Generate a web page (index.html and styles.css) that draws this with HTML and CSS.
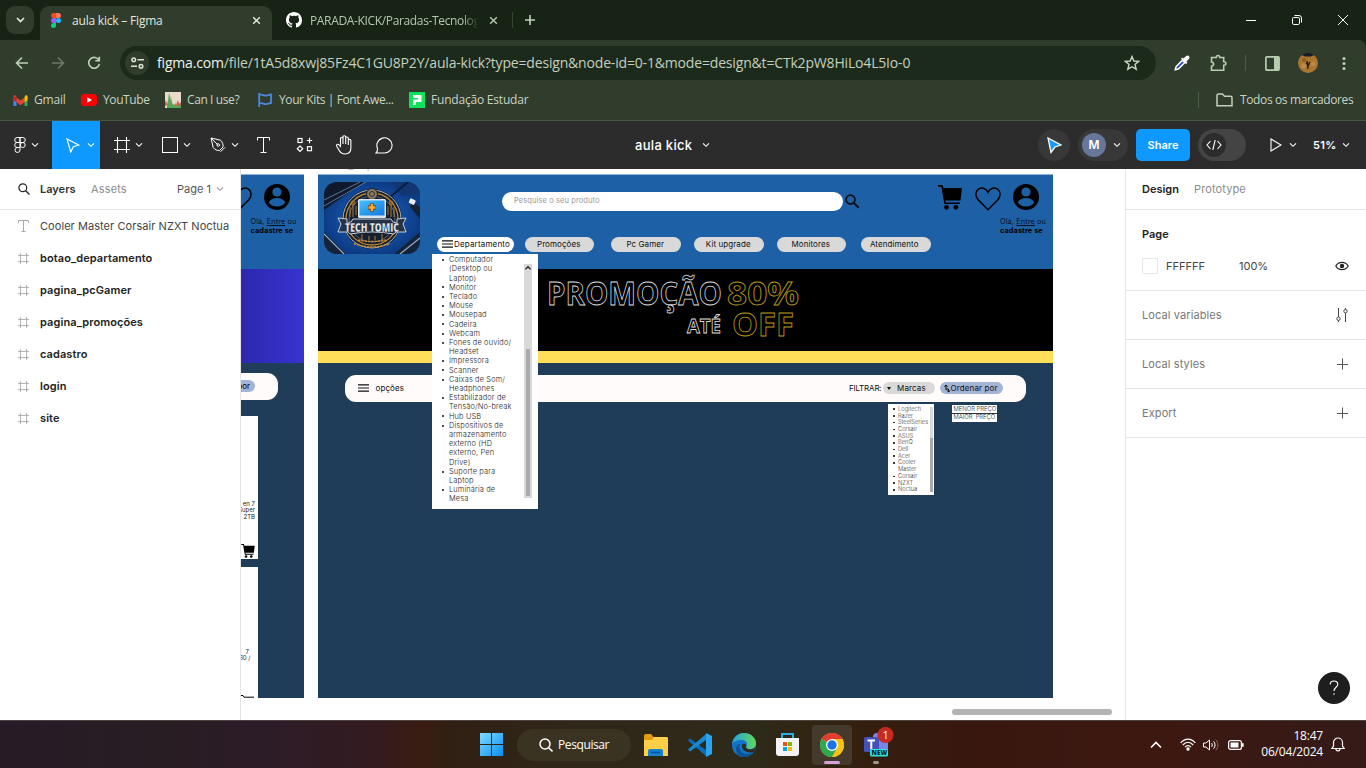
FILE: index.html
```html
<!DOCTYPE html>
<html lang="pt-BR">
<head>
<meta charset="utf-8">
<title>aula kick – Figma</title>
<link rel="stylesheet" href="styles.css">
</head>
<body>
<svg class="defs" width="0" height="0" aria-hidden="true">
  <symbol id="chev" viewBox="0 0 8 6"><path d="M1 1.3 4 4.3 7 1.3" fill="none" stroke="currentColor" stroke-width="1.1"/></symbol>
  <symbol id="close" viewBox="0 0 10 10"><path d="M1.3 1.3 8.7 8.7M8.7 1.3 1.3 8.7" fill="none" stroke="currentColor" stroke-width="1.6"/></symbol>
  <symbol id="frame" viewBox="0 0 16 16"><path d="M3.5 0v16M12.5 0v16M0 3.5h16M0 12.5h16" fill="none" stroke="currentColor" stroke-width="1.1"/></symbol>
  <symbol id="plus" viewBox="0 0 12 12"><path d="M6.5 .5v11M1 6.5h11" fill="none" stroke="currentColor"/></symbol>
  <symbol id="cart" viewBox="0 0 24 25"><path d="M0 0h4.5l1 3H24l-1.5 12.5H7.3l.6 2H22v1.6H6.3L3.3 1.8H0z"/><circle cx="8.5" cy="22.3" r="2.4"/><circle cx="17.8" cy="22.3" r="2.4"/></symbol>
  <symbol id="heart" viewBox="0 0 26 24"><path d="M13 22.7 3.4 13C.2 9.6.2 5 2.9 2.6 6-.3 11 .8 13 5.3 15 .8 20-.3 23.1 2.6 25.8 5 25.800 9.600 22.600 13z" fill="none" stroke="#000" stroke-width="1.5"/></symbol>
  <symbol id="user" viewBox="0 0 26 26"><circle cx="13" cy="13" r="13"/><circle cx="13" cy="8" r="4.600" fill="#1e60a6"/><path d="M4.800 18.500C6 15.500 9 14 13 14s7 1.500 8.200 4.500C19.500 21 16.500 22.500 13 22.500S6.500 21 4.800 18.500z" fill="#1e60a6"/></symbol>
  <symbol id="burger" viewBox="0 0 11 8"><path d="M0 .8h11M0 4h11M0 7.200h11" fill="none" stroke="#111" stroke-width="1.200"/></symbol>
</svg>

<div class="tabs">
  <div class="tabmenu"><svg width="9" height="6"><path d="M1 1 4.500 4.500 8 1" fill="none" stroke="#e4e9df" stroke-width="1.700"/></svg></div>
  <div class="tab active">
    <svg class="fig" width="10" height="15" viewBox="0 0 10 15"><path d="M5 0H2.500a2.500 2.500 0 0 0 0 5H5z" fill="#f24e1e"/><path d="M5 0h2.500a2.500 2.500 0 0 1 0 5H5z" fill="#ff7262"/><path d="M5 5H2.500a2.500 2.500 0 0 0 0 5H5z" fill="#a259ff"/><circle cx="7.500" cy="7.500" r="2.500" fill="#1abcfe"/><path d="M5 10H2.500A2.500 2.500 0 1 0 5 12.500z" fill="#0acf83"/></svg>
    <span class="tt t-fig">aula kick – Figma</span>
    <svg class="x" width="9" height="9"><use href="#close"/></svg>
  </div>
  <div class="tab second">
    <svg width="16" height="16" viewBox="0 0 16 16"><path fill="#fff" d="M8 0C3.580 0 0 3.580 0 8c0 3.540 2.290 6.530 5.470 7.590.4.070.55-.17.55-.38 0-.19-.01-.82-.01-1.490-2.010.37-2.530-.49-2.690-.94-.09-.23-.48-.94-.82-1.130-.28-.15-.68-.52-.01-.53.63-.01 1.080.58 1.230.82.72 1.210 1.870.87 2.330.66.07-.52.28-.87.51-1.070-1.780-.2-3.640-.89-3.640-3.950 0-.87.31-1.590.82-2.150-.08-.2-.36-1.020.08-2.120 0 0 .67-.21 2.200.82.64-.18 1.320-.27 2-.27s1.360.09 2 .27c1.530-1.040 2.200-.82 2.200-.82.44 1.100.16 1.920.08 2.120.51.56.82 1.270.82 2.150 0 3.070-1.870 3.750-3.650 3.950.29.25.54.73.54 1.480 0 1.070-.01 1.930-.01 2.200 0 .21.15.46.55.38A8 8 0 0 0 16 8c0-4.420-3.580-8-8-8z"/></svg>
    <span class="tt t-git">PARADA-KICK/Paradas-Tecnolog</span>
    <svg class="x" width="9" height="9"><use href="#close"/></svg>
  </div>
  <i class="vbar"></i>
  <svg class="newtab" width="12" height="12" viewBox="0 0 12 12"><path d="M6 1v10M1 6h10" stroke="#c3d2bb" stroke-width="1.600"/></svg>
  <div class="winbtns">
    <svg width="10" height="10"><path d="M0 5.500h10" stroke="#fff"/></svg>
    <svg width="10" height="10"><path d="M2.500.5H7A2.500 2.500 0 0 1 9.500 3v4.500" fill="none" stroke="#fff"/><rect x=".5" y="2.500" width="7" height="7" rx="1.300" fill="none" stroke="#fff"/></svg>
    <svg width="10" height="10"><path d="M0 0 10 10M10 0 0 10" stroke="#fff"/></svg>
  </div>
</div>

<div class="chrome">
  <div class="navrow">
    <svg class="nav" width="14" height="14" viewBox="0 0 14 14"><path d="M13 7H2M7 1.500 1.500 7 7 12.500" fill="none" stroke="#c0d0b8" stroke-width="1.600"/></svg>
    <svg class="nav" width="14" height="14" viewBox="0 0 14 14"><path d="M1 7h11M7 1.500 12.500 7 7 12.500" fill="none" stroke="#6d7a68" stroke-width="1.600"/></svg>
    <svg class="nav" width="14" height="14" viewBox="0 0 14 14"><path d="M12 4.500A5.400 5.400 0 1 0 12.400 8M12.300.8v4H8.300" fill="none" stroke="#c0d0b8" stroke-width="1.600"/></svg>
    <div class="omni">
      <span class="site"><svg width="13" height="12" viewBox="0 0 13 12" fill="none" stroke="#dbe5d4" stroke-width="1.500"><circle cx="2.700" cy="2.700" r="1.800"/><path d="M6.500 2.700H13M0 9.200h6"/><circle cx="10" cy="9.200" r="1.800"/></svg></span>
      <span class="url"><b>figma.com</b>/file/1tA5d8xwj85Fz4C1GU8P2Y/aula-kick?type=design&amp;node-id=0-1&amp;mode=design&amp;t=CTk2pW8HiLo4L5Io-0</span>
      <svg class="star" width="16" height="16" viewBox="0 0 16 16"><path d="M8 1.600 9.900 6l4.800.4-3.700 3.100 1.200 4.700L8 11.700l-4.200 2.500L5 9.500 1.300 6.400 6.100 6z" fill="none" stroke="#ccd8c6" stroke-width="1.400"/></svg>
    </div>
    <div class="exts">
      <svg width="18" height="18" viewBox="0 0 18 18"><path d="M2.300 15.700 3 12.800 9.500 6.200l2.300 2.300L5.300 15z" fill="#2742b8" stroke="#fff" stroke-width="1.600"/><path d="M9.300 4.800 13.200 8.700" stroke="#fff" stroke-width="2" stroke-linecap="round"/><path d="M12 6l2.500-2.500" stroke="#fff" stroke-width="4" stroke-linecap="round"/></svg>
      <svg width="19" height="18" viewBox="0 0 19 18"><path d="M2.500 3.500h4.800C7.300.8 10.700.8 10.700 3.500h4v4.300c3 .1 3 3.400 0 3.500v5H2.500v-4c2.800-.4 2.800-4 0-4.300z" fill="none" stroke="#b7cdae" stroke-width="1.600"/></svg>
      <i class="vbar"></i>
      <svg width="15" height="15" viewBox="0 0 15 15"><rect x=".9" y=".9" width="13.200" height="13.200" rx="1" fill="none" stroke="#b7cdae" stroke-width="1.700"/><path d="M9 1h5v13H9z" fill="#b7cdae"/></svg>
      <svg width="20" height="20" viewBox="0 0 20 20"><circle cx="10" cy="10" r="10" fill="#a97732"/><path d="M4 2a10 10 0 0 1 12 0L13 3.500H7z" fill="#171a29"/><path d="M9 8l1 8M8 10l3 2M12 9l-2 4" stroke="#2b190a" stroke-width="1.400"/><circle cx="5.500" cy="13" r="2.500" fill="#bd8b45"/><circle cx="15" cy="11" r="2.500" fill="#bd8b45"/><circle cx="6" cy="7" r="2" fill="#8c5e26"/></svg>
      <svg width="4" height="15" fill="#c0d0b8"><circle cx="2" cy="2.500" r="1.500"/><circle cx="2" cy="7.500" r="1.500"/><circle cx="2" cy="12.500" r="1.500"/></svg>
    </div>
  </div>
  <div class="marks">
    <span class="bm b1"><svg width="15" height="11" viewBox="0 0 14 11"><path d="M0 1.500V11h3V5z" fill="#4285f4"/><path d="M14 1.500V11h-3V5z" fill="#34a853"/><path d="M0 1.500V5l3 2.200V2.500z" fill="#c5221f"/><path d="M3 2.500v4.700l4 3 4-3V2.500l-4 3z" fill="#ea4335"/><path d="M11 2.500v4.700L14 5V1.500C14 0 12.500-.3 11.500.8z" fill="#fbbc04"/><path d="M0 1.500C0 0 1.500-.3 2.500.8L3 2.500z" fill="#ea4335"/></svg><em>Gmail</em></span>
    <span class="bm b2"><svg width="16" height="12"><rect width="16" height="12" rx="3.500" fill="#f00"/><path d="M6.200 3.300v5.400L11 6z" fill="#fff"/></svg><em>YouTube</em></span>
    <span class="bm b3"><svg width="16" height="16"><path d="M0 0h16v16H0z" fill="#e8dcc8"/><path d="M0 14V11l1-3 1 5zM9 14l1-3 1 2 2-5 1 4 2-2v4z" fill="#d05a4a"/><path d="M2 16v-4l1-3 1-8 1 4v4l1-5 1 7 2 2 2 1 2-2 1 2 2-1v3z" fill="#58a558"/></svg><em>Can I use?</em></span>
    <span class="bm b4"><svg width="14" height="14" viewBox="0 0 14 14"><path d="M1.200 0v14M1 2c3-1.500 5 1.500 8 .5 1.500-.5 3-1 4-1v8.500c-1 0-2.500.5-4 1-3 .9-5-2-8-.5" fill="none" stroke="#4a88dc" stroke-width="1.800"/></svg><em>Your Kits | Font Awe...</em></span>
    <span class="bm b5"><svg width="16" height="16"><path d="M0 0h16v16H0z" fill="#0be35d"/><path d="M4 3h8.500v7H7v3H4V7.500h5V6H4z" fill="#fff"/></svg><em>Fundação Estudar</em></span>
    <i class="vbar"></i>
    <span class="bm b6"><svg width="17" height="14" viewBox="0 0 17 14"><path d="M1 12.800V2.500c0-1 .5-1.500 1.500-1.500h4l2 2.200h6c1 0 1.500.5 1.500 1.500v8.100z" fill="none" stroke="#c3cfbd" stroke-width="1.500"/></svg><em>Todos os marcadores</em></span>
  </div>
</div>

<div class="toolbar">
  <div class="tool main"><svg width="12" height="16" viewBox="0 0 12 16" fill="none" stroke="#fff"><path d="M6 .5H3.200a2.500 2.500 0 0 0 0 5H6zM6 .5h2.800a2.500 2.500 0 0 1 0 5H6zM6 5.500H3.200a2.500 2.500 0 0 0 0 5H6z"/><circle cx="8.700" cy="8" r="2.500"/><path d="M6 10.500H3.200A2.500 2.500 0 1 0 6 13z"/></svg><svg class="c" width="8" height="6"><use href="#chev"/></svg></div>
  <div class="tool sel"><svg width="14" height="15" viewBox="0 0 14 15"><path d="M1 1 12.800 7 7.300 8.700 4.700 14z" fill="none" stroke="#fff" stroke-width="1.200"/></svg><svg class="c" width="8" height="6"><use href="#chev"/></svg></div>
  <div class="tool"><svg width="16" height="16"><use href="#frame"/></svg><svg class="c" width="8" height="6"><use href="#chev"/></svg></div>
  <div class="tool"><svg width="16" height="16"><rect x=".5" y=".5" width="15" height="15" fill="none" stroke="#fff"/></svg><svg class="c" width="8" height="6"><use href="#chev"/></svg></div>
  <div class="tool"><svg width="16" height="16" viewBox="0 0 16 16" fill="none" stroke="#fff"><path d="M1 1l9.500 2.200c2 1.800 2.800 4.300 2.500 6.800l-3.500 3.500C7 13.800 4.800 12.500 3.200 10.500zM1 1l6.500 6.500M10.500 14.800l4.500-4.500"/><circle cx="8.200" cy="8" r="1.300"/></svg><svg class="c" width="8" height="6"><use href="#chev"/></svg></div>
  <div class="tool nar"><svg width="14" height="16"><path d="M.5 3.500v-3h12v3M6.500 .5v15M3.500 15.500h6" fill="none" stroke="#fff"/></svg></div>
  <div class="tool nar"><svg width="17" height="16" viewBox="0 0 17 16" fill="none" stroke="#fff" stroke-width="1.200"><rect x="2" y="1.500" width="4" height="4"/><path d="M13.500.8v5.400M10.800 3.500h5.400M4 9l2.700 2.700L4 14.400 1.300 11.700z"/><rect x="11.500" y="9.700" width="4" height="4"/></svg></div>
  <div class="tool nar"><svg width="18" height="20" viewBox="0 0 18 20" fill="none" stroke="#fff" stroke-width="1.100"><path d="M5.500 11.500V3.600c0-1.500 2.500-1.500 2.500 0V9 2c0-1.700 2.700-1.700 2.700 0v7-5.800c0-1.600 2.600-1.600 2.600 0V10 5.500c0-1.500 2.600-1.500 2.600 0v7c0 4-2 6.500-5.800 6.500-3.300 0-4.900-1.500-6.200-4l-2.200-3.700c-.9-1.700 1.200-2.700 2.300-1.300z"/></svg></div>
  <div class="tool nar"><svg width="18" height="17" viewBox="0 0 18 17"><path d="M1 16c1.500-1.500 1.700-2.500 1.500-4.500A7.600 7.600 0 1 1 9.500 16z" fill="none" stroke="#fff" stroke-width="1.100"/></svg></div>
  <div class="doc"><span>aula kick</span><svg width="8" height="6"><use href="#chev"/></svg></div>
  <div class="circ"><svg width="15" height="17" viewBox="0 0 15 17"><path d="M1 1 14 8 8 10 4 15.500z" fill="#199bff" stroke="#fff" stroke-width="1.300"/></svg></div>
  <div class="who"><b>M</b><svg width="8" height="6"><use href="#chev"/></svg></div>
  <div class="share">Share</div>
  <div class="dev"><span><svg width="16" height="10" viewBox="0 0 16 10"><path d="M4.500 1 1 5l3.500 4M11.500 1 15 5l-3.500 4M9.200 0 6.800 10" fill="none" stroke="#fff" stroke-width="1.100"/></svg></span></div>
  <svg class="play" width="12" height="14"><path d="M1 1 11 7 1 13z" fill="none" stroke="#fff" stroke-width="1.100"/></svg>
  <svg class="pc" width="8" height="6"><use href="#chev"/></svg>
  <span class="pct">51%</span>
  <svg class="zc" width="8" height="6"><use href="#chev"/></svg>
</div>

<div class="work">
  <div class="left">
    <div class="lhead"><svg width="12" height="12" viewBox="0 0 12 12"><circle cx="4.800" cy="4.800" r="3.900" fill="none" stroke="#222" stroke-width="1.200"/><path d="m7.700 7.700 3.800 3.800" stroke="#222" stroke-width="1.300"/></svg><b>Layers</b><span class="as">Assets</span><span class="pg">Page 1</span><svg class="pgc" width="8" height="6"><use href="#chev"/></svg></div>
    <div class="row txt"><svg width="12" height="12"><path d="M.5 3V.5h10V3M5.500 .5v11M3.500 11.500h4" fill="none" stroke="#aaa"/></svg>Cooler Master Corsair NZXT Noctua</div>
    <div class="row"><svg width="11" height="11"><use href="#frame"/></svg>botao_departamento</div>
    <div class="row"><svg width="11" height="11"><use href="#frame"/></svg>pagina_pcGamer</div>
    <div class="row"><svg width="11" height="11"><use href="#frame"/></svg>pagina_promoções</div>
    <div class="row"><svg width="11" height="11"><use href="#frame"/></svg>cadastro</div>
    <div class="row"><svg width="11" height="11"><use href="#frame"/></svg>login</div>
    <div class="row"><svg width="11" height="11"><use href="#frame"/></svg>site</div>
  </div>

  <div class="canvas">
   <div class="world">
    <div class="p fname">botao_departamento</div>

    <div class="p fr1">
      <div class="h1"></div><div class="grad"></div>
    </div>
    <svg class="p ht1" width="26" height="24"><use href="#heart"/></svg>
    <svg class="p us1" width="26" height="26"><use href="#user"/></svg>
    <div class="p ola o1">Olá, <u>Entre</u> ou<br><b>cadastre se</b></div>
    <div class="p bar1"><span>por</span></div>
    <div class="p card c1"></div><div class="p card c2"></div>
    <div class="p spec s1">en 7<br>Super<br>2TB</div>
    <div class="p spec s2">7&nbsp;<br>60 /</div>
    <svg class="p ct1" width="14" height="14"><use href="#cart"/></svg>
    <svg class="p ct2" width="14" height="3"><path d="M0 .5h3l1 1.700h10" fill="none" stroke="#000"/></svg>

    <div class="p fr2"><div class="h1"></div><div class="ban"></div><div class="yel"></div></div>
    <svg class="p logo" width="96" height="72" viewBox="0 0 96 72">
      <defs><clipPath id="lc"><rect width="96" height="72" rx="13"/></clipPath><radialGradient id="lg"><stop offset="0" stop-color="#1f6bcb"/><stop offset="1" stop-color="#0d3c86"/></radialGradient><linearGradient id="scr" x2="1" y2="1"><stop stop-color="#43c0ff"/><stop offset="1" stop-color="#1478dc"/></linearGradient></defs>
      <g clip-path="url(#lc)"><path d="M0 0h96v72H0z" fill="url(#lg)"/>
        <path d="M0 0h40L0 28z" fill="#101a2c"/><path d="M0 18 36 0M0 24 42 0" stroke="#58749c"/><path d="M67 0h29v12L78 14z" fill="#113670"/><path d="M84 0 66 15" stroke="#0a1e40" stroke-width="2"/>
        <path d="M0 50 22 72H0zM96 50 70 72h26z" fill="#13233c"/><path d="M0 52 20 72M96 56 76 72" stroke="#9ba9bd" stroke-width="1.200"/><path d="m88 20 8 5v12l-10-12z" fill="#142036"/><rect x="85" y="17" width="6" height="5" rx="1" fill="#e9eef6" transform="rotate(25 88 20)"/>
        <circle cx="48" cy="37" r="30" fill="#151f30"/><circle cx="48" cy="37" r="29" fill="none" stroke="#adb6bf" stroke-width="1"/><circle cx="48" cy="37" r="26" fill="none" stroke="#c08636" stroke-width="1.300"/><circle cx="48" cy="37" r="23" fill="none" stroke="#566578"/>
        <circle cx="48" cy="12" r="5.500" fill="#8d7a58" stroke="#1b2430"/><circle cx="48" cy="12" r="2.500" fill="none" stroke="#2b3340"/>
        <g stroke="#b07a34" fill="none"><path d="M29 20v15M32 24v9M26 25v10M67 20v15M64 24v9M70 25v10M38 52v7M58 52v7M45 54v4M51 54v4"/><circle cx="29" cy="21" r="2"/><circle cx="67" cy="21" r="2"/></g>
        <rect x="34" y="17" width="28" height="19" rx="1.500" fill="#d7e5ef"/><rect x="35.500" y="18.500" width="25" height="15" fill="url(#scr)"/><path d="M48 21.500v8M44 25.500h8" stroke="#63370c" stroke-width="4"/><path d="M48 22v7M44.500 25.500h7" stroke="#ffab2e" stroke-width="2.500"/>
        <path d="M14 36l9 1v4l4-1 2-3h38l2 3 4 1v-4l9-1-3 6 3 8h-10l-2 2q-22-4-44 0l-2-2H14l3-8z" fill="#253348" stroke="#c7cfda" stroke-width="1"/>
        <text class="lt" x="21" y="49.500" textLength="54" lengthAdjust="spacingAndGlyphs">TECH TOMIC</text>
        <path d="M34 58q14 3 28 0M30 61.500q18 7 36 0" stroke="#c78c34" fill="none" stroke-width="1.500" stroke-dasharray="2.500 .8"/>
      </g></svg>
    <div class="p search">Pesquise o seu produto</div>
    <svg class="p mag" width="15" height="15"><circle cx="5.500" cy="5.500" r="4.400" fill="none" stroke="#0a0f16" stroke-width="1.800"/><path d="m8.700 8.700 5 5" stroke="#0a0f16" stroke-width="2"/></svg>
    <svg class="p ct" width="24" height="25"><use href="#cart"/></svg>
    <svg class="p ht" width="26" height="24"><use href="#heart"/></svg>
    <svg class="p us" width="26" height="26"><use href="#user"/></svg>
    <div class="p ola o2">Olá, <u>Entre</u> ou<br><b>cadastre se</b></div>

    <div class="p pill dep"><svg width="11" height="8"><use href="#burger"/></svg>Departamento</div>
    <div class="p pill m1">Promoções</div><div class="p pill m2">Pc Gamer</div><div class="p pill m3">Kit upgrade</div><div class="p pill m4">Monitores</div><div class="p pill m5">Atendimento</div>

    <svg class="p promo" width="270" height="80">
      <text class="pw" x="6" y="36" font-size="31.500" textLength="175" lengthAdjust="spacingAndGlyphs">PROMOÇÃO</text>
      <text class="py" x="186" y="36" font-size="31.500" textLength="72" lengthAdjust="spacingAndGlyphs">80%</text>
      <text class="pw" x="146" y="64" font-size="19" textLength="34" lengthAdjust="spacingAndGlyphs">ATÉ</text>
      <text class="py" x="191" y="66.500" font-size="32" textLength="62" lengthAdjust="spacingAndGlyphs">OFF</text>
    </svg>

    <div class="p opts"><svg width="11" height="8"><use href="#burger"/></svg><span class="op">opções</span><span class="fl">FILTRAR:</span><span class="mk"><i></i>Marcas</span><span class="or"><svg width="7" height="9" viewBox="0 0 7 9"><path d="M2 6V1M.3 2.800 2 1l1.700 1.800M2 5h2.500V8M3 6.400 4.600 8l1.700-1.600" fill="none" stroke="#111"/></svg>Ordenar por</span></div>

    <div class="p drop">
      <ul><li>Computador<br>(Desktop ou<br>Laptop)</li><li>Monitor</li><li>Teclado</li><li>Mouse</li><li>Mousepad</li><li>Cadeira</li><li>Webcam</li><li>Fones de ouvido/<br>Headset</li><li>Impressora</li><li>Scanner</li><li>Caixas de Som/<br>Headphones</li><li>Estabilizador de<br>Tensão/No-break</li><li>Hub USB</li><li>Dispositivos de<br>armazenamento<br>externo (HD<br>externo, Pen<br>Drive)</li><li>Suporte para<br>Laptop</li><li>Luminária de<br>Mesa</li></ul>
      <div class="sb"><svg width="8" height="8"><path d="M1.500 5.200 4 2.700l2.500 2.500" fill="none" stroke="#222" stroke-width="1.300"/></svg><i></i></div>
    </div>
    <div class="p brands">
      <ul><li>Logitech</li><li>Razer</li><li>SteelSeries</li><li>Corsair</li><li>ASUS</li><li>BenQ</li><li>Dell</li><li>Acer</li><li>Cooler<br>Master</li><li>Corsair</li><li>NZXT</li><li>Noctua</li></ul>
      <div class="sb"><i></i></div>
    </div>
    <div class="p price"><div>MENOR PREÇO</div><div>MAIOR&nbsp; PREÇO</div></div>
    <div class="p hscroll"></div>
   </div>
  </div>

  <div class="right">
    <div class="rhead"><b>Design</b><span>Prototype</span></div>
    <div class="rpage"><b>Page</b><div class="col"><i></i><span class="hex">FFFFFF</span><span class="opa">100%</span><svg width="14" height="10" viewBox="0 0 14 10"><path d="M.8 5C3.500.2 10.500.2 13.200 5 10.500 9.800 3.500 9.800.8 5z" fill="none" stroke="#222" stroke-width="1.200"/><circle cx="7" cy="5" r="2.200" fill="#222"/></svg></div></div>
    <div class="rrow"><span>Local variables</span><svg width="12" height="14" viewBox="0 0 12 14" fill="none" stroke="#444"><path d="M2.500 0v9M2.500 12.500V14M9.500 0v1.500M9.500 5v9"/><circle cx="2.500" cy="10.700" r="1.700"/><circle cx="9.500" cy="3.200" r="1.700"/></svg></div>
    <div class="rrow"><span>Local styles</span><svg width="12" height="12"><use href="#plus"/></svg></div>
    <div class="rrow"><span>Export</span><svg width="12" height="12"><use href="#plus"/></svg></div>
    <div class="help"><svg width="10" height="16" viewBox="0 0 10 16"><path d="M1.200 4.500C1.200-.2 8.800-.2 8.800 4.300 8.800 7.300 5 7.300 5 11" fill="none" stroke="#fff" stroke-width="1.100"/><circle cx="5" cy="14" r=".8" fill="#fff"/></svg></div>
  </div>
</div>

<div class="taskbar">
  <svg class="win" width="23" height="23" viewBox="0 0 23 23"><defs><linearGradient id="wg" x2="1" y2="1"><stop stop-color="#7fdcff"/><stop offset="1" stop-color="#0a8df0"/></linearGradient></defs><path d="M0 0h11v11H0zM12 0h11v11H12zM0 12h11v11H0zM12 12h11v11H12z" fill="url(#wg)"/></svg>
  <div class="tsearch"><svg width="14" height="14"><circle cx="6" cy="6" r="5" fill="none" stroke="#fff" stroke-width="1.500"/><path d="m9.700 9.700 3.800 3.800" stroke="#fff" stroke-width="1.600"/></svg><span>Pesquisar</span></div>
  <svg class="ti" width="24" height="22" viewBox="0 0 24 22"><path d="M0 2C0 .8.800 0 2 0h5l2.500 3H22v8H0z" fill="#e39b10"/><path d="M0 6h8l2-3h12.500c1 0 1.500.5 1.500 1.500V22H0z" fill="#ffcf48"/><path d="M4 22v-5c0-1.200.8-2 2-2h11c1.200 0 2 .8 2 2v5z" fill="#1681cc"/><path d="M7 18.500h9" stroke="#0a5491" stroke-width="1.500"/></svg>
  <svg class="ti" width="24" height="24" viewBox="0 0 24 24"><path d="m0 7.500 2-2L18 17v6z" fill="#0a6fb8"/><path d="m0 16.500 2 2L18 7V1z" fill="#1688d4"/><path d="m18 0 6 3v18l-6 3z" fill="#2ba5f2"/></svg>
  <svg class="ti" width="24" height="24" viewBox="0 0 24 24"><defs><linearGradient id="eg" x2="1"><stop stop-color="#24a2e4"/><stop offset="1" stop-color="#62d957"/></linearGradient></defs><circle cx="12" cy="12" r="12" fill="#1373c6"/><path d="M0 11C1 4 6 0 12 0c7 0 12 5 12 10 0 4-3 6-6 6s-4-1-4-2 1-1 1-3-2-4-5-4C5 7 1 9 0 11z" fill="url(#eg)"/><path d="M8 11c-2 6 2 10 7 10 3 0 5-.6 7-2-2 3-6 5-10 5-5 0-8-4-8-8 0-3 2-5 4-5z" fill="#0d5294"/><path d="M14 14c0 2 5 4 9.500.5L22 19c-8 2-13-3-12-7 .6-2 5-2 4 2z" fill="#2f2a19"/></svg>
  <svg class="ti" width="23" height="24" viewBox="0 0 23 24"><path d="M6 6V1h11v5" fill="none" stroke="#28aee8" stroke-width="2"/><path d="M0 5h23v15c0 2-1 3-3 3H3c-2 0-3-1-3-3z" fill="#f3f3f3"/><path d="M7 9h4v4H7z" fill="#f25022"/><path d="M12 9h4v4h-4z" fill="#7fba00"/><path d="M7 14h4v4H7z" fill="#00a4ef"/><path d="M12 14h4v4h-4z" fill="#ffb900"/></svg>
  <div class="gc"><svg width="24" height="24" viewBox="0 0 24 24"><circle cx="12" cy="12" r="12" fill="#fbc116"/><path d="M12 12 1.600 6A12 12 0 0 1 22.400 6z" fill="#e33b2e"/><path d="M12 12 1.600 6A12 12 0 0 0 12 24l5.200-9z" fill="#2da94f"/><path d="M12 6h10.400A12 12 0 0 1 12 24l5.200-9z" fill="#fbc116"/><circle cx="12" cy="12" r="6" fill="#fff"/><circle cx="12" cy="12" r="4.700" fill="#1a73e8"/></svg><i></i></div>
  <div class="teams"><svg width="30" height="34" viewBox="0 0 30 34"><circle cx="13" cy="11" r="4" fill="#7b83eb"/><rect x="9" y="12" width="15" height="16" rx="2" fill="#7b83eb"/><rect x="0" y="11" width="15" height="15" rx="1.500" fill="#4551ba"/><path d="M3.500 14.500h7.500M7.300 14.500V23" stroke="#fff" stroke-width="2"/><rect x="6" y="23" width="18" height="7.500" rx="1.500" fill="#2ce3e0"/><text class="new" x="7.500" y="29">NEW</text><circle cx="21.500" cy="9" r="8" fill="#c52b22"/><text class="one" x="18.500" y="13">1</text></svg><i></i></div>
  <svg class="up" width="12" height="8"><path d="M1 6.500 6 1.500l5 5" fill="none" stroke="#fff" stroke-width="1.600"/></svg>
  <svg class="wifi" width="16" height="13" viewBox="0 0 16 13" fill="none" stroke="#fff" stroke-width="1.200"><path d="M.7 4.800C5-.2 11-.2 15.300 4.800M2.800 7C6 3.300 10 3.300 13.200 7M5 9.200c1.800-2 4.200-2 6 0"/><circle cx="8" cy="11" r="1.100" fill="#fff"/></svg>
  <svg class="vol" width="16" height="12" viewBox="0 0 16 12" fill="none" stroke="#fff"><path d="M.5 4H3l3.500-3v10L3 8H.5zM8.500 4c1 1 1 3 0 4M10.500 2.300c2 2 2 5.400 0 7.400"/><path d="M12.700.7c3 3 3 7.600 0 10.600" stroke="#86706a"/></svg>
  <svg class="bat" width="16" height="10"><rect x=".6" y=".6" width="12.800" height="8.800" rx="2" fill="none" stroke="#fff" stroke-width="1.200"/><path d="M2.500 2.500h8v5h-8zM14 3.200h1.700v3.600H14z" fill="#fff"/></svg>
  <div class="clock">18:47<br>06/04/2024</div>
  <svg class="bell" width="14" height="15" viewBox="0 0 14 15"><path d="M.8 11.500 2.500 9V5.500a4.500 4.500 0 0 1 9 0V9l1.700 2.500zM5 12c0 2.500 4 2.500 4 0" fill="none" stroke="#fff" stroke-width="1.200"/></svg>
</div>
</body>
</html>
```
FILE: styles.css
```css
* { box-sizing: border-box; }
html, body { margin: 0; width: 1366px; height: 768px; overflow: hidden; }
body { font-family: Inter, "Liberation Sans", sans-serif; font-size: 11px; background: #162315; display: flex; flex-direction: column; }
svg { display: block; flex: none; }
svg.defs { position: absolute; }
em { font-style: normal; }
.vbar { display: block; width: 1px; height: 16px; background: #4c5c47; flex: none; }

/* browser tabs */
.tabs { height: 40px; flex: none; background: #162315; display: flex; align-items: center; font: 12px "Open Sans", sans-serif; color: #e2e8de; padding-left: 6px; }
.tabmenu { width: 28px; height: 28px; border-radius: 9px; background: #303d2d; display: flex; align-items: center; justify-content: center; }
.tab { display: flex; align-items: center; white-space: nowrap; height: 34px; }
.active { width: 232px; margin: 6px 0 0 6px; background: #303d2d; border-radius: 9px 9px 0 0; padding: 0 0 6px 11px; }
.t-fig { margin-left: 11px; width: 179px; letter-spacing: -.2px; }
.active .x { margin-left: 1px; }
.second { margin-left: 14px; color: #b7c6b0; }
.t-git { margin-left: 8px; width: 170px; overflow: hidden; letter-spacing: -.35px; -webkit-mask-image: linear-gradient(90deg, #000 90%, transparent 99%); }
.second .x { margin-left: 9px; }
.tabs > .vbar { margin-left: 14px; background: #35442f; }
.newtab { margin-left: 11px; }
.winbtns { margin-left: auto; display: flex; gap: 36px; padding-right: 18px; }

/* address and bookmarks */
.chrome { height: 81px; flex: none; background: #303d2d; border-bottom: 1px solid #475442; font-family: "Open Sans", sans-serif; border-radius: 0 8px 0 0; }
.navrow { height: 46px; display: flex; align-items: center; padding-left: 15px; }
.nav { margin-right: 22px; }
.omni { margin-left: -3px; width: 1036px; height: 34px; border-radius: 17px; background: #1c2a1b; display: flex; align-items: center; padding-left: 5px; }
.site { width: 24px; height: 24px; border-radius: 50%; background: #303d2d; display: flex; align-items: center; justify-content: center; }
.url { margin: -1px 0 0 8px; width: 967px; font-size: 14px; letter-spacing: -.172px; color: #c4cfbf; white-space: nowrap; }
.url b { font-weight: 400; color: #f0f4ee; }
.exts { display: flex; align-items: center; margin-left: 17px; }
.exts > :nth-child(2) { margin-left: 18px; }
.exts > :nth-child(3) { margin-left: 17px; }
.exts > :nth-child(4) { margin-left: 19px; }
.exts > :nth-child(5) { margin-left: 18px; }
.exts > :nth-child(6) { margin-left: 24px; }
.marks { height: 28px; display: flex; align-items: center; font-size: 12px; color: #c9d3c4; padding-left: 13px; }
.bm { display: flex; align-items: center; gap: 6px; white-space: nowrap; letter-spacing: -.4px; }
.bm em { margin-top: -1px; }
.b1 { width: 68px; } .b2 { width: 84px; } .b3 { width: 93px; } .b4 { width: 151px; gap: 7px; }
.b1, .b5 { letter-spacing: -.2px; }
.marks .vbar { margin-left: auto; margin-right: 17px; }
.b6 { width: 150px; gap: 7px; letter-spacing: -.37px; }

/* editor toolbar */
.toolbar { height: 48px; flex: none; background: #2c2c2c; color: #fff; display: flex; align-items: center; padding-left: 4px; }
.tool { width: 48px; height: 48px; display: flex; align-items: center; padding-left: 14px; }
.tool .c { margin-left: auto; margin-right: 5px; }
.main { padding-left: 10px; }
.main .c { margin-right: 13px; }
.sel { background: #0d99ff; }
.nar { width: 40px; justify-content: center; padding: 0; }
.doc { margin-left: 231px; width: 403px; display: flex; align-items: center; gap: 10px; font-size: 13px; font-weight: 500; letter-spacing: .3px; }
.circ { width: 32px; height: 32px; border-radius: 50%; background: #383838; display: flex; align-items: center; justify-content: center; }
.who { width: 50px; height: 32px; border-radius: 16px; background: #383838; margin-left: 8px; display: flex; align-items: center; padding-left: 4px; gap: 7px; }
.who b { width: 24px; height: 24px; border-radius: 50%; background: #667799; text-align: center; font: 600 12px/24px Inter; }
.share { width: 54px; height: 32px; margin-left: 8px; border-radius: 5px; background: #0d99ff; text-align: center; font-weight: 600; line-height: 32px; }
.dev { width: 48px; height: 32px; margin-left: 8px; border-radius: 16px; background: #444; padding: 4px; }
.dev span { width: 24px; height: 24px; border-radius: 50%; background: #2c2c2c; display: flex; align-items: center; justify-content: center; }
.play { margin-left: 24px; } .pc { margin-left: 7px; }
.pct { margin-left: 16px; width: 29px; font-weight: 600; letter-spacing: .3px; }

.work { height: 551px; flex: none; display: flex; }
.left { width: 241px; border-right: 1px solid #e5e5e5; color: #333; background: #fff; }
.lhead { height: 41px; display: flex; align-items: center; border-bottom: 1px solid #e5e5e5; padding-left: 18px; }
.lhead b { font-weight: 600; margin-left: 10px; width: 51px; }
.as { width: 86px; color: #8c8c8c; letter-spacing: .15px; } .pg { width: 39px; color: #555; } .pgc { color: #999; }
.row { height: 32px; display: flex; align-items: center; padding-left: 18px; gap: 11px; font-weight: 600; letter-spacing: .09px; color: #222; white-space: nowrap; }
.row svg { color: #999; }
.txt { font-weight: 400; color: #444; gap: 10px; letter-spacing: .06px; }
.right { width: 241px; border-left: 1px solid #e5e5e5; background: #fff; color: #444; position: relative; }
.rhead { height: 41px; display: flex; align-items: center; padding-left: 16px; gap: 15px; border-bottom: 1px solid #e5e5e5; color: #8c8c8c; letter-spacing: .12px; }
.right b { font-weight: 600; color: #222; letter-spacing: 0; }
.rpage { height: 81px; border-bottom: 1px solid #e5e5e5; padding: 17px 17px 0 16px; line-height: 15px; }
.col { display: flex; align-items: center; margin-top: 16px; }
.col i { width: 16px; height: 16px; border: 1px solid #e8e8e8; }
.hex { margin-left: 8px; width: 73px; } .opa { width: 96px; }
.rrow { height: 49px; border-bottom: 1px solid #e5e5e5; display: flex; align-items: center; justify-content: space-between; padding: 0 18px 0 16px; color: #777; letter-spacing: .1px; }
.rrow svg { color: #555; }
.help { position: absolute; left: 192px; top: 503px; width: 32px; height: 32px; border-radius: 50%; background: #1e1e1e; display: flex; align-items: center; justify-content: center; }

/* design canvas: .world uses window coordinates */
.canvas { width: 884px; position: relative; overflow: hidden; background: #fff; }
.world { position: absolute; left: -241px; top: -169px; width: 1366px; height: 768px; }
.p { position: absolute; white-space: nowrap; }
.fname { left: 318px; top: 158px; font-size: 11px; color: #bbb; letter-spacing: .1px; line-height: 14px; }
.fr1 { left: 200px; top: 174px; width: 104px; height: 523.500px; background: #1f3d58; }
.h1 { height: 95px; background: #1e60a6; border-top: 1px solid #8fb0d2; }
.grad { height: 94px; background: linear-gradient(90deg, #2925a0 20%, #3933d2); }
.ht1 { left: 226px; top: 187px; } .us1 { left: 264px; top: 184px; }
.ola { font-size: 7.300px; line-height: 9.200px; color: #04101f; letter-spacing: .12px; }
.ola b { color: #000; font-weight: 700; }
.o1 { left: 250.500px; top: 217px; } .o2 { left: 1000px; top: 217px; }
.bar1 { left: 220px; top: 372.500px; width: 57.500px; height: 27px; border-radius: 11px; background: #fffbfb; }
.bar1 span { display: block; margin: 7px 0 0 0; width: 35px; height: 12px; border-radius: 6px; background: #a3b5d6; font-size: 8px; line-height: 12px; text-align: right; padding-right: 5px; }
.card { left: 230px; width: 27.500px; background: #fff; }
.c1 { top: 416px; height: 142.500px; } .c2 { top: 566.500px; height: 131px; }
.spec { font-size: 6px; line-height: 6.700px; text-align: right; color: #222; }
.s1 { right: 1111px; top: 500.500px; } .s2 { right: 1115.500px; top: 648.500px; }
.ct1 { left: 240.500px; top: 543.500px; } .ct2 { left: 240px; top: 695px; }
.fr2 { left: 317.500px; top: 174px; width: 735.500px; height: 523.500px; background: #1f3d58; }
.ban { height: 81.500px; background: #000; } .yel { height: 12.500px; background: #ffde59; }
.logo { left: 323.500px; top: 182px; }
.lt { font: 800 11.500px "Open Sans"; fill: #f4f6fa; stroke: #101826; stroke-width: .3px; }
.search { left: 502px; top: 192px; width: 341px; height: 18.500px; border-radius: 10px; background: #fff; color: #999; font-size: 7.500px; line-height: 18.500px; padding-left: 12px; letter-spacing: .09px; }
.mag { left: 845px; top: 194px; }
.ct { left: 938px; top: 185px; } .ht { left: 975px; top: 187px; } .us { left: 1013px; top: 184px; }
.pill { top: 237px; width: 69.500px; height: 14.500px; border-radius: 7.500px; background: #d9d9d9; color: #111; font-size: 8px; line-height: 15.500px; text-align: center; letter-spacing: .08px; padding-right: 1px; }
.dep { left: 437px; width: 77px; background: #fff; line-height: 13.500px; display: flex; align-items: center; gap: 1px; padding-left: 5px; letter-spacing: .17px; }
.m1 { left: 524.500px; } .m2 { left: 611px; } .m3 { left: 694px; } .m4 { left: 776.500px; } .m5 { left: 861px; padding-right: 3px; }
.promo { left: 541px; top: 269px; }
.promo text { font-family: "Open Sans"; font-weight: 700; fill: none; stroke-width: .8px; }
.pw { stroke: #ddd; } .py { stroke: #b89a1c; }
.opts { left: 344.500px; top: 375px; width: 681px; height: 26.500px; border-radius: 11px; background: #fffbfb; color: #111; display: flex; align-items: center; padding-left: 13.500px; font-size: 8px; }
.op { margin-left: 6.500px; width: 473.500px; letter-spacing: .1px; } .fl { width: 34px; letter-spacing: -.18px; }
.mk { width: 52px; height: 12px; border-radius: 6px; background: #d9d9d9; line-height: 12px; padding-left: 14px; position: relative; letter-spacing: .15px; }
.mk i { position: absolute; left: 3.500px; top: 5px; border: 2.500px solid transparent; border-top: 3px solid #111; }
.or { margin-left: 4.500px; width: 63px; height: 12px; border-radius: 6px; background: #a3b5d6; line-height: 12px; display: flex; align-items: center; padding-left: 4px; gap: 0; letter-spacing: .13px; }
ul { list-style: none; margin: 0; padding: 0; }
li::before { content: ""; position: absolute; left: -7px; top: 3.700px; width: 2px; height: 2px; border-radius: 50%; background: #111; }
li { position: relative; }
.drop { left: 432px; top: 254px; width: 106px; height: 254.500px; background: #fff; padding: 1.200px 0 0 17px; font-size: 7.400px; line-height: 9.200px; color: #222; font-weight: 300; letter-spacing: .15px; }
.drop .sb { position: absolute; left: 92px; top: 10px; width: 8px; height: 234px; background: #d9d9d9; }
.drop .sb i { position: absolute; left: 2px; top: 85px; width: 4px; height: 147px; background: #aaa; }
.brands { left: 887.500px; top: 404px; width: 46.500px; height: 90.500px; background: #fff; padding: 1.800px 0 0 10.500px; font-size: 5.600px; line-height: 6.700px; color: #333; font-weight: 300; letter-spacing: .08px; }
.brands li::before { left: -5px; top: 2.700px; width: 1.600px; height: 1.600px; }
.brands .sb { position: absolute; left: 42px; top: 3px; width: 3px; height: 85px; background: #d9d9d9; }
.brands .sb i { position: absolute; left: 0; top: 31px; width: 3px; height: 54px; background: #aaa; }
.price { left: 952px; top: 405px; width: 44.500px; height: 16.500px; background: #fff; font-size: 5.900px; line-height: 7.500px; padding-left: 1.500px; color: #222; letter-spacing: -.02px; font-weight: 300; }
.price div + div { border-top: 1px solid #333; margin-left: -1.500px; padding-left: 1.500px; line-height: 6px; }
.hscroll { left: 952px; top: 709px; width: 160px; height: 6px; border-radius: 3px; background: #b3b3b3; }

.taskbar { height: 48px; flex: none; border-top: 1px solid #4c4341; background: linear-gradient(90deg, #271b27 0, #281d23 12%, #2c1c28 19%, #331b20 27%, #3a1c12 31%, #302013 33%, #2f2718 42%, #2e2a19 55%, #33210f 62%, #38170f 70%, #3d1811 85%, #341a18 100%); display: flex; align-items: center; color: #fff; font: 12px "Open Sans", sans-serif; padding-left: 480px; }
.tsearch { margin-left: 14px; width: 114px; height: 32px; border-radius: 16px; background: #3b3322; display: flex; align-items: center; padding-left: 22px; gap: 5px; letter-spacing: -.4px; }
.ti { margin-left: 20px; }
.tsearch + .ti { margin-left: 13px; }
.gc { margin-left: 13px; width: 40px; height: 40px; border-radius: 4px; background: #443a2c; padding: 8px 0 0 8px; }
.gc i { display: block; width: 16px; height: 3px; border-radius: 2px; background: #d8a0dd; margin: 4px 0 0 4px; }
.teams { margin-left: 12px; width: 30px; height: 42px; padding-top: 2px; }
.teams i { display: block; width: 6px; height: 3px; border-radius: 2px; background: #a09890; margin: 1px 0 0 9px; }
.new { font: 800 6.500px "Open Sans"; fill: #062727; } .one { font: 11px "Open Sans"; fill: #fff; }
.up { margin-left: 256px; } .wifi { margin-left: 18px; } .vol { margin-left: 7px; } .bat { margin-left: 9px; }
.clock { width: 79px; text-align: right; line-height: 16px; letter-spacing: -.2px; margin-top: -2px; }
.bell { margin-left: 8px; }
```
